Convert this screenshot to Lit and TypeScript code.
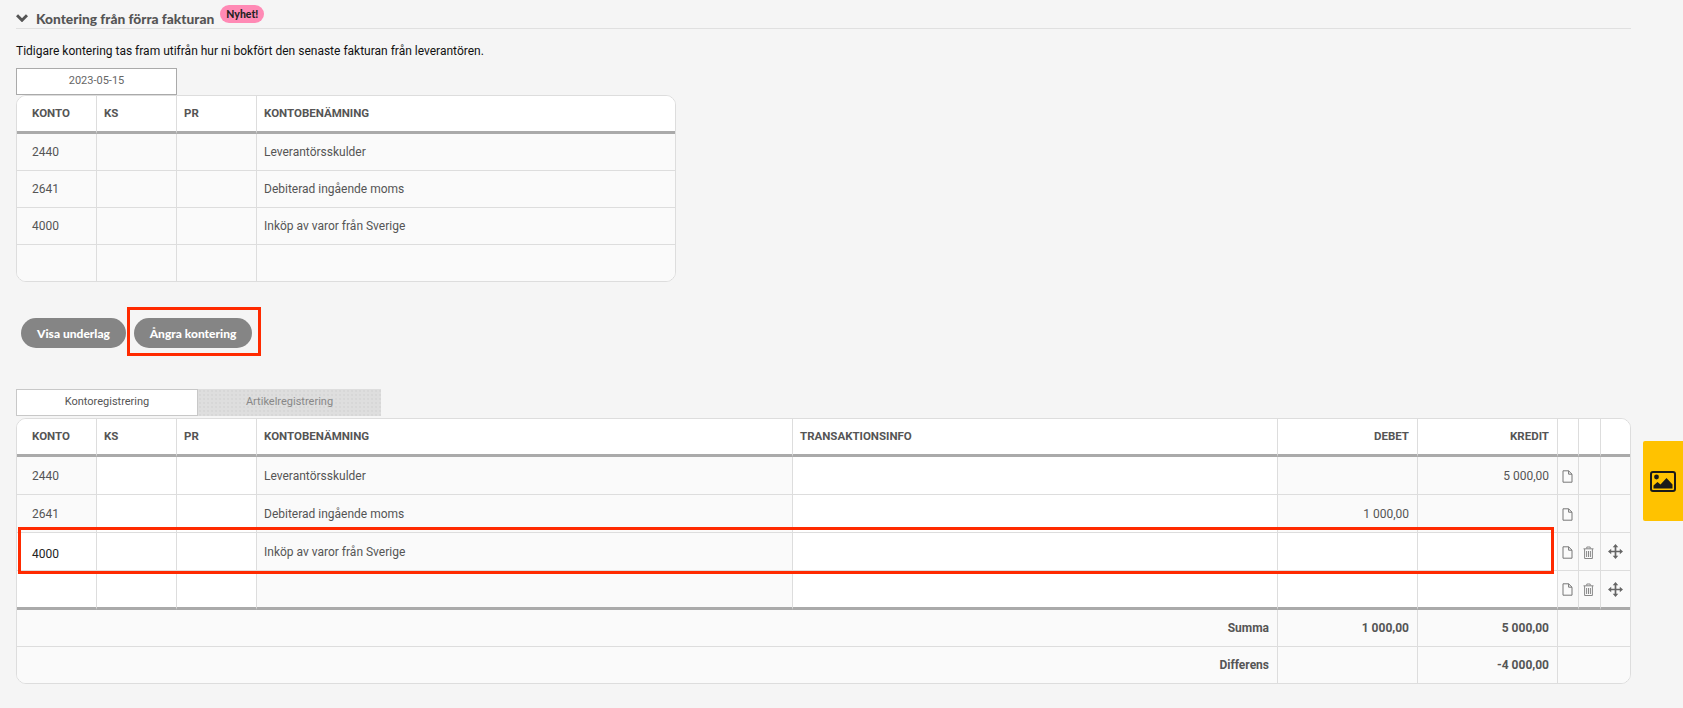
import { LitElement, html, css } from "lit";
import { customElement } from "lit/decorators.js";

const docIcon = html`<svg class="ic shift" width="11" height="13" viewBox="0 0 11 13" fill="none" stroke="#777" stroke-width="1"><path d="M1 .8h5.6L10 4.2v8H1zM6.6.8v3.4H10"/></svg>`;
const trashIcon = html`<svg class="ic shift" width="11" height="13" viewBox="0 0 11 13" fill="none" stroke="#888" stroke-width="1"><path d="M.5 2.8h10M3.8 2.5V1h3.4v1.5M1.6 3v9.5h7.8V3M3.6 5v6M5.5 5v6M7.4 5v6"/></svg>`;
const moveIcon = html`<svg class="ic" width="15" height="15" viewBox="0 0 14 14"><path d="M7 2v10M2 7h10" stroke="#666" stroke-width="1.6"/><path d="M7 0l2.6 3H4.4zM7 14l-2.6-3h5.2zM0 7l3-2.6v5.2zM14 7l-3 2.6V4.4z" fill="#666"/></svg>`;

const accounts = [
  ["2440", "Leverantörsskulder"],
  ["2641", "Debiterad ingående moms"],
  ["4000", "Inköp av varor från Sverige"],
  ["", ""],
];

@customElement("app-root")
export class AppRoot extends LitElement {
  static styles = css`
    :host { display: block; height: 708px; background: #f5f5f5; font-family: Roboto, sans-serif; font-size: 12px; color: #555; overflow: hidden; position: relative; }
    * { box-sizing: border-box; }
    .page { padding: 0 52px 0 16px; position: relative; height: 708px; }
    .head { display: flex; align-items: center; height: 29px; border-bottom: 1px solid #e0e0e0; padding-top: 8px; }
    .chev { margin-right: 8px; }
    .title { font-family: Lato, sans-serif; font-weight: 900; font-size: 13.75px; color: #555; }
    .badge { font-family: Lato, sans-serif; font-weight: 900; font-size: 10.5px; color: #222; background: #ff8ab5; border-radius: 9px; height: 18px; line-height: 18px; padding: 0 6px; margin-left: 6px; margin-top: -9px; }
    .intro { margin: 14px 0 0; height: 25px; line-height: 16px; font-size: 12px; color: #111; }
    .tabs { display: flex; }
    .tab { height: 27px; display: flex; align-items: center; justify-content: center; padding-bottom: 3px; font-size: 11px; }
    .date { width: 161px; background: #fff; border: 1px solid #aaa; color: #666; }
    .tabs.second { margin-bottom: 2px; }
    .tabs.second .tab { height: 27px; padding-bottom: 2px; }
    .active { width: 182px; background: #fff; border: 1px solid #c8c8c8; color: #555; }
    .off { width: 183px; color: #888; background-color: #dedede; background-image: radial-gradient(#cfcfcf 0.6px, transparent 0.8px); background-size: 4px 4px; }
    .wrap { border: 1px solid #ddd; border-radius: 10px; overflow: hidden; background: #fff; }
    .wrap.small { width: 660px; }
    .wrap.small tr:last-child td { height: 36px; }
    table { border-collapse: separate; border-spacing: 0; table-layout: fixed; width: 100%; }
    th, td { padding: 0 8px 0 7px; border-right: 1px solid #ddd; border-bottom: 1px solid #ddd; text-align: left; font-size: 12px; }
    th:last-child, td:last-child { border-right: 0; }
    tr:last-child td { border-bottom: 0; }
    th { height: 38px; border-bottom: 3px solid #aaa; font-weight: 700; font-size: 11.5px; color: #555; background: #fff; padding-bottom: 2px; }
    th.first, td.first { padding-left: 15px; }
    td { height: 37px; background: #fafafa; color: #555; }
    .r { text-align: right; }
    td.w { background: #fff; }
    .tall td { height: 38px; }
    .tall .lastrow td { border-bottom: 3px solid #aaa; height: 39px; }
    .tall .sum td { height: 37px; font-weight: 700; }
    .tall .sum.end td { height: 36px; }
    td.dark { color: #222; padding-top: 4px; }
    td.ico { padding: 0; text-align: center; }
    .ic { display: inline-block; vertical-align: middle; }
    .shift { margin-right: 2px; }
    .actions { display: flex; gap: 8px; padding: 36px 0 0 5px; height: 107px; }
    .btn { height: 30px; border-radius: 15px; background: #858585; color: #fff; font-family: Lato, sans-serif; font-weight: 900; font-size: 12px; display: flex; align-items: center; justify-content: center; border: 0; }
    .b1 { width: 105px; }
    .b2 { width: 118px; }
    .mark { position: absolute; border: 3px solid #ff2a00; pointer-events: none; }
    .m1 { left: 127px; top: 307px; width: 134px; height: 49px; }
    .m2 { left: 18px; top: 527px; width: 1536px; height: 47px; }
    .side { position: absolute; left: 1643px; top: 441px; width: 40px; height: 80px; background: #ffc200; border-radius: 2px 0 0 2px; display: flex; align-items: center; justify-content: center; }
  `;

  private colgroup(full: boolean) {
    return full
      ? html`<colgroup><col style="width:80px"/><col style="width:80px"/><col style="width:80px"/><col style="width:536px"/><col style="width:485px"/><col style="width:140px"/><col style="width:140px"/><col style="width:21px"/><col style="width:22px"/><col/></colgroup>`
      : html`<colgroup><col style="width:80px"/><col style="width:80px"/><col style="width:80px"/><col/></colgroup>`;
  }

  render() {
    return html`<div class="page">
      <div class="head">
        <svg class="chev" width="12" height="8" viewBox="0 0 12 8" fill="none" stroke="#555" stroke-width="3"><path d="M1 1.2l5 5 5-5"/></svg>
        <span class="title">Kontering från förra fakturan</span>
        <span class="badge">Nyhet!</span>
      </div>
      <p class="intro">Tidigare kontering tas fram utifrån hur ni bokfört den senaste fakturan från leverantören.</p>
      <div class="tabs"><div class="tab date">2023-05-15</div></div>
      <div class="wrap small">
        <table>
          ${this.colgroup(false)}
          <thead><tr><th class="first">KONTO</th><th>KS</th><th>PR</th><th>KONTOBENÄMNING</th></tr></thead>
          <tbody>
            ${accounts.map(([k, n]) => html`<tr><td class="first">${k}</td><td></td><td></td><td>${n}</td></tr>`)}
          </tbody>
        </table>
      </div>
      <div class="actions">
        <button class="btn b1">Visa underlag</button>
        <button class="btn b2">Ångra kontering</button>
      </div>
      <div class="tabs second">
        <div class="tab active">Kontoregistrering</div>
        <div class="tab off">Artikelregistrering</div>
      </div>
      <div class="wrap">
        <table class="tall">
          ${this.colgroup(true)}
          <thead><tr><th class="first">KONTO</th><th>KS</th><th>PR</th><th>KONTOBENÄMNING</th><th>TRANSAKTIONSINFO</th><th class="r">DEBET</th><th class="r">KREDIT</th><th></th><th></th><th></th></tr></thead>
          <tbody>
            <tr><td class="first">2440</td><td class="w"></td><td class="w"></td><td>Leverantörsskulder</td><td class="w"></td><td></td><td class="r">5 000,00</td><td class="ico">${docIcon}</td><td class="ico"></td><td class="ico"></td></tr>
            <tr><td class="first">2641</td><td class="w"></td><td class="w"></td><td>Debiterad ingående moms</td><td class="w"></td><td class="r">1 000,00</td><td></td><td class="ico">${docIcon}</td><td class="ico"></td><td class="ico"></td></tr>
            <tr><td class="first w dark">4000</td><td class="w"></td><td class="w"></td><td>Inköp av varor från Sverige</td><td class="w"></td><td class="w"></td><td class="w"></td><td class="ico">${docIcon}</td><td class="ico">${trashIcon}</td><td class="ico">${moveIcon}</td></tr>
            <tr class="lastrow"><td class="first w"></td><td class="w"></td><td class="w"></td><td></td><td class="w"></td><td class="w"></td><td class="w"></td><td class="ico">${docIcon}</td><td class="ico">${trashIcon}</td><td class="ico">${moveIcon}</td></tr>
            <tr class="sum"><td colspan="5" class="r">Summa</td><td class="r">1 000,00</td><td class="r">5 000,00</td><td colspan="3"></td></tr>
            <tr class="sum end"><td colspan="5" class="r">Differens</td><td></td><td class="r">-4 000,00</td><td colspan="3"></td></tr>
          </tbody>
        </table>
      </div>
      <div class="mark m1"></div>
      <div class="mark m2"></div>
    </div>
    <div class="side">
      <svg width="26" height="21" viewBox="0 0 26 21"><rect x="1" y="1" width="24" height="19" rx="2" fill="none" stroke="#1a1a1a" stroke-width="2"/><circle cx="6.5" cy="6" r="2.4" fill="#1a1a1a"/><path d="M3.5 17.5v-3l4-3.5 3 2.5 6-6.5 6 6.5v4z" fill="#1a1a1a"/></svg>
    </div>`;
  }
}
